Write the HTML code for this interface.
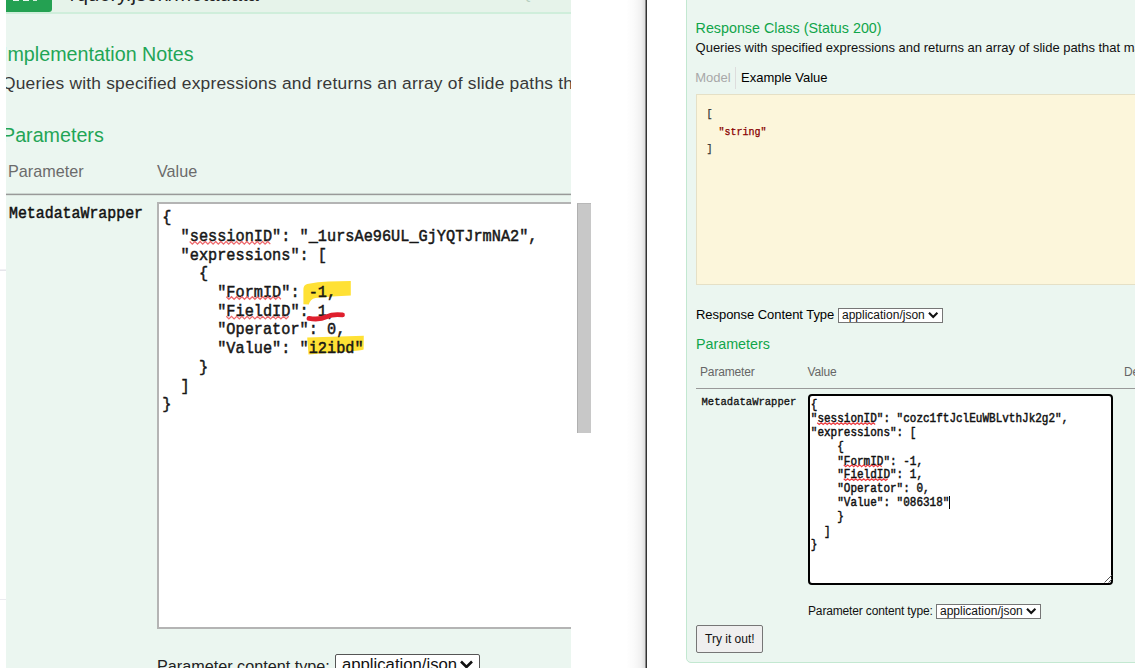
<!DOCTYPE html>
<html><head><meta charset="utf-8">
<style>
*{box-sizing:border-box;margin:0;padding:0}
html,body{width:1135px;height:668px;overflow:hidden;background:#fff}
body{position:relative;font-family:"Liberation Sans",sans-serif;color:#000}
.abs{position:absolute;white-space:pre}
.mono{font-family:"Liberation Mono",monospace;font-weight:normal;-webkit-text-stroke:0.45px #111}
.monoR{-webkit-text-stroke:0.42px #111}
#L{position:absolute;left:6px;top:0;width:565px;height:668px;background:#ebf6f0;overflow:hidden}
#L .hdr{position:absolute;left:0;top:0;width:565px;height:14px;background:#e6f3ea;border-bottom:2px solid #cfeedb}
#L .btn{position:absolute;left:0;top:0;width:46px;height:12.4px;background:#24a152;border-radius:0 0 3px 0}
.g{color:#1fa556}
.gr{color:#10a54a}
.s12{font-size:12px;letter-spacing:-0.15px}
#R{position:absolute;left:686px;top:-10px;width:460px;height:672.5px;background:#ebf6f0;border:1px solid #c3e8d1;border-radius:0 0 0 5px}
svg{position:absolute;left:0;top:0;overflow:visible}
</style></head><body>
<div class="abs" style="left:0;top:269px;width:6px;height:1px;background:#f1f1f4"></div>
<div class="abs" style="left:0;top:270px;width:6px;height:1px;background:#e6e6eb"></div>
<div class="abs" style="left:0;top:599px;width:6px;height:1px;background:#ebebef"></div>

<div id="L">
  <div class="hdr"></div><div class="btn"></div>
  <div class="abs" style="left:7px;top:0;width:6.4px;height:1.3px;background:#fff;opacity:.9"></div>
  <div class="abs" style="left:16.5px;top:0;width:6.7px;height:1.3px;background:#fff;opacity:.9"></div>
  <div class="abs" style="left:27px;top:0;width:3.6px;height:1.3px;background:#fff;opacity:.8"></div>
  <div class="abs" style="left:65px;top:-17px;font-size:20.3px;color:#222">/query.json/metadata</div>
  <div class="abs" style="left:515px;top:-14.5px;font-size:14px;color:#b5cfc0">Queries with</div>
  <div class="abs g" style="left:-4px;top:43px;font-size:19.7px">Implementation Notes</div>
  <div class="abs" style="left:-4px;top:72.8px;font-size:17.4px;color:#383838;letter-spacing:.21px">Queries with specified expressions and returns an array of slide paths that match</div>
  <div class="abs g" style="left:-4px;top:124px;font-size:19.7px">Parameters</div>
  <div class="abs" style="left:2px;top:162px;font-size:16.2px;color:#6b6b6b">Parameter</div>
  <div class="abs" style="left:151px;top:162px;font-size:16.2px;color:#6b6b6b">Value</div>
  <div class="abs" style="left:0;top:193px;width:565px;height:1px;background:#ccd5d0"></div>
  <div class="abs" style="left:0;top:194px;width:565px;height:1px;background:#999"></div>
  <div class="abs" style="left:0;top:195px;width:565px;height:1px;background:#dde7e1"></div>
  <div class="abs mono" style="left:3px;top:205.5px;font-size:14.9px;color:#111;transform:scaleY(1.1);transform-origin:0 50%">MetadataWrapper</div>
  <div class="abs" style="left:151px;top:202px;width:430px;height:427px;background:#fff;border:2px solid #b4b4b4"></div>
</div>
<div class="abs" style="left:577px;top:203px;width:14px;height:230px;background:#c8c8c8;border-left:1px solid #b0b0b0;border-top:1px solid #b8b8b8"></div>

<svg width="1135" height="668" viewBox="0 0 1135 668">
  <path d="M307.2,283.9 Q318,281.6 328.2,281.4 L350.8,281.1 L350.8,295.4 L332,296.6 L315.5,297.9 Q310,299 308.8,304.6 L303.4,304.3 L303.4,289 Q303.6,285 307.2,283.9 Z" fill="#ffe135"/>
  <path d="M307.2,337.4 L363.8,335.8 L363.6,349.5 Q362,350.3 347.3,351.6 L308.5,354.6 Z" fill="#ffe135"/>
</svg>

<div class="abs mono" id="lt" style="left:162.3px;top:208.5px;font-size:15.25px;line-height:18.67px;color:#1a1a1a;transform:scaleY(1.1);transform-origin:0 0"><span style="display:block;line-height:16.97px">{
  "sessionID": "_1ursAe96UL_GjYQTJrmNA2",
  "expressions": [
    {
      "FormID": -1,
      "FieldID": 1,
      "Operator": 0,
      "Value": "i2ibd"
    }
  ]
}</span></div>

<svg width="1135" height="668" viewBox="0 0 1135 668">
  <path d="M309,318.4 C316,319.6 322,319 327,316.6 S 337,314.3 342.5,314.9" fill="none" stroke="#df1f2d" stroke-width="4.8" stroke-linecap="round"/>
  <path d="M189.7,241.5 L192.3,244.1 L194.9,241.5 L197.5,244.1 L200.1,241.5 L202.7,244.1 L205.3,241.5 L207.9,244.1 L210.5,241.5 L213.1,244.1 L215.7,241.5 L218.3,244.1 L220.9,241.5 L223.5,244.1 L226.1,241.5 L228.7,244.1 L231.3,241.5 L233.9,244.1 L236.5,241.5 L239.1,244.1 L241.7,241.5 L244.3,244.1 L246.9,241.5 L249.5,244.1 L252.1,241.5 L254.7,244.1 L257.3,241.5 L259.9,244.1 L262.5,241.5 L265.1,244.1 L267.7,241.5 L270.3,244.1" fill="none" stroke="#ee6a6e" stroke-width="1.3"/><path d="M226.3,296.7 L228.9,299.3 L231.5,296.7 L234.1,299.3 L236.7,296.7 L239.3,299.3 L241.9,296.7 L244.5,299.3 L247.1,296.7 L249.7,299.3 L252.3,296.7 L254.9,299.3 L257.5,296.7 L260.1,299.3 L262.7,296.7 L265.3,299.3 L267.9,296.7 L270.5,299.3 L273.1,296.7 L275.7,299.3 L278.3,296.7 L280.9,299.3" fill="none" stroke="#ee6a6e" stroke-width="1.3"/><path d="M226.3,316.3 L228.9,318.9 L231.5,316.3 L234.1,318.9 L236.7,316.3 L239.3,318.9 L241.9,316.3 L244.5,318.9 L247.1,316.3 L249.7,318.9 L252.3,316.3 L254.9,318.9 L257.5,316.3 L260.1,318.9 L262.7,316.3 L265.3,318.9 L267.9,316.3 L270.5,318.9 L273.1,316.3 L275.7,318.9 L278.3,316.3 L280.9,318.9 L283.5,316.3 L286.1,318.9 L288.7,316.3" fill="none" stroke="#ee6a6e" stroke-width="1.3"/>
</svg>

<div class="abs" style="left:157px;top:657px;font-size:16.2px;color:#222">Parameter content type:</div>
<div class="abs" style="left:335px;top:654px;width:144.5px;height:30px;background:#fff;border:1.5px solid #555;border-radius:2px"></div>
<div class="abs" style="left:342px;top:655px;font-size:16.7px;color:#111">application/json</div>
<svg width="1135" height="668" viewBox="0 0 1135 668"><path d="M461,661.5 l5.5,5.5 l5.5,-5.5" fill="none" stroke="#111" stroke-width="2.6"/></svg>

<div class="abs" style="left:626px;top:0;width:20px;height:668px;background:linear-gradient(to right,rgba(0,0,0,0),rgba(0,0,0,.02) 40%,rgba(0,0,0,.055) 75%,rgba(0,0,0,.15))"></div>
<div class="abs" style="left:646px;top:0;width:1px;height:668px;background:#333"></div>
<div class="abs" style="left:645px;top:0;width:1px;height:668px;background:#8a8a8a"></div>

<div id="R"></div>
<div class="abs gr" style="left:695.6px;top:20px;font-size:14.3px">Response Class (Status 200)</div>
<div class="abs" style="left:695.6px;top:39.6px;font-size:13px;color:#111;letter-spacing:-0.025px">Queries with specified expressions and returns an array of slide paths that match</div>
<div class="abs" style="left:695.2px;top:70px;font-size:13px;color:#a8a8a8">Model</div>
<div class="abs" style="left:735px;top:67px;width:1px;height:22px;background:#ddd"></div>
<div class="abs" style="left:741px;top:70px;font-size:13px;color:#000">Example Value</div>
<div class="abs" style="left:696px;top:94px;width:450px;height:191px;background:#fcf6db;border:1px solid #e5e0c6"></div>
<div class="abs" style="left:706.6px;top:106px;font-family:'Liberation Mono',monospace;font-size:10px;line-height:17.5px;color:#333;-webkit-text-stroke:0.25px currentColor">[
  <span style="color:#800">"string"</span>
]</div>
<div class="abs" style="left:696px;top:307px;font-size:13px;color:#000;letter-spacing:-0.05px">Response Content Type</div>
<div class="abs" style="left:838px;top:307.5px;width:105px;height:15px;background:#fff;border:1px solid #767676"></div>
<div class="abs s12" style="left:842px;top:307.5px;color:#111;letter-spacing:0">application/json</div>
<div class="abs gr" style="left:696px;top:336px;font-size:14.3px">Parameters</div>
<div class="abs s12" style="left:700px;top:365px;color:#666">Parameter</div>
<div class="abs s12" style="left:807.5px;top:365px;color:#666">Value</div>
<div class="abs s12" style="left:1124px;top:365px;color:#666">Description</div>
<div class="abs" style="left:696px;top:388px;width:450px;height:1px;background:#999"></div>
<div class="abs mono" style="-webkit-text-stroke:0.3px #111;left:701.5px;top:395.5px;font-size:10.55px;color:#111;transform:scaleY(1.12);transform-origin:0 50%">MetadataWrapper</div>
<div class="abs" style="left:808.2px;top:394.3px;width:305.3px;height:190.5px;background:#fff;border:2px solid #000;border-radius:4px"></div>
<div class="abs mono monoR" id="rt" style="left:810.8px;top:397.9px;font-size:11px;color:#111;transform:scaleY(1.13);transform-origin:0 0"><span style="display:block;line-height:12.39px">{
"sessionID": "cozc1ftJclEuWBLvthJk2g2",
"expressions": [
    {
    "FormID": -1,
    "FieldID": 1,
    "Operator": 0,
    "Value": "086318"
    }
  ]
}</span></div>
<div class="abs" style="left:949px;top:496px;width:1px;height:13px;background:#000"></div>
<svg width="1135" height="668" viewBox="0 0 1135 668">
  <path d="M817.2,422.7 L819.2,424.5 L821.2,422.7 L823.2,424.5 L825.2,422.7 L827.2,424.5 L829.2,422.7 L831.2,424.5 L833.2,422.7 L835.2,424.5 L837.2,422.7 L839.2,424.5 L841.2,422.7 L843.2,424.5 L845.2,422.7 L847.2,424.5 L849.2,422.7 L851.2,424.5 L853.2,422.7 L855.2,424.5 L857.2,422.7 L859.2,424.5 L861.2,422.7 L863.2,424.5 L865.2,422.7 L867.2,424.5 L869.2,422.7 L871.2,424.5 L873.2,422.7 L875.2,424.5" fill="none" stroke="#ee3b3f" stroke-width="1.15"/><path d="M843.7,464.9 L845.7,466.7 L847.7,464.9 L849.7,466.7 L851.7,464.9 L853.7,466.7 L855.7,464.9 L857.7,466.7 L859.7,464.9 L861.7,466.7 L863.7,464.9 L865.7,466.7 L867.7,464.9 L869.7,466.7 L871.7,464.9 L873.7,466.7 L875.7,464.9 L877.7,466.7 L879.7,464.9 L881.7,466.7" fill="none" stroke="#ee3b3f" stroke-width="1.15"/><path d="M843.7,478.7 L845.7,480.5 L847.7,478.7 L849.7,480.5 L851.7,478.7 L853.7,480.5 L855.7,478.7 L857.7,480.5 L859.7,478.7 L861.7,480.5 L863.7,478.7 L865.7,480.5 L867.7,478.7 L869.7,480.5 L871.7,478.7 L873.7,480.5 L875.7,478.7 L877.7,480.5 L879.7,478.7 L881.7,480.5 L883.7,478.7 L885.7,480.5 L887.7,478.7" fill="none" stroke="#ee3b3f" stroke-width="1.15"/>
  <path d="M1104.5,582.5 L1112,575 M1108.5,582.5 L1112,579" fill="none" stroke="#555" stroke-width="1"/>
</svg>
<div class="abs s12" style="left:808px;top:604px;color:#111">Parameter content type:</div>
<div class="abs" style="left:936px;top:603.5px;width:105px;height:15px;background:#fff;border:1px solid #767676"></div>
<div class="abs s12" style="left:940px;top:603.5px;color:#111;letter-spacing:0">application/json</div>
<div class="abs" style="left:696px;top:625px;width:67px;height:28px;background:#efefef;border:1px solid #767676;border-radius:2px"></div>
<div class="abs s12" style="left:705px;top:631.5px;color:#111;letter-spacing:0">Try it out!</div>
<svg width="1135" height="668" viewBox="0 0 1135 668">
  <path d="M1027,608.8 l4.2,4.2 l4.2,-4.2" fill="none" stroke="#111" stroke-width="2.1"/>
  <path d="M929,312.8 l4.2,4.2 l4.2,-4.2" fill="none" stroke="#111" stroke-width="2.1"/>
</svg>
</body></html>
